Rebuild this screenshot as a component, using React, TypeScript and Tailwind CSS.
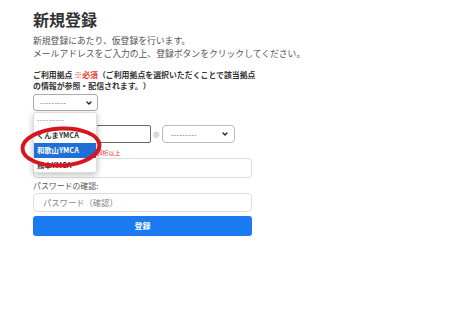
import { ChevronDown } from "lucide-react";

function FakeSelect({ className }: { className: string }) {
  return (
    <div className={`flex items-center justify-between bg-white border border-[#aaa] rounded-[3px] pl-[6px] pr-[4px] ${className}`}>
      <span className="text-[7px] text-[#555] tracking-[0.5px] leading-none">---------</span>
      <ChevronDown size={8} strokeWidth={4} className="text-[#222]" />
    </div>
  );
}

export default function App() {
  return (
    <div className="relative w-[450px] h-[311px] overflow-hidden bg-white font-['Noto_Sans_CJK_JP','Noto_Sans',sans-serif] text-[#444]">
      <div className="pl-[33px] pt-[8px]">
        <h1 className="text-[16px] leading-[22px] font-semibold text-[#333]">新規登録</h1>
        <p className="mt-[3.5px] text-[8.8px] leading-[13px] text-[#555]">
          新規登録にあたり、仮登録を行います。
          <br />
          メールアドレスをご入力の上、登録ボタンをクリックしてください。
        </p>
        <p className="mt-[9px] text-[7.9px] leading-[11px] font-bold text-[#333]">
          ご利用拠点 <span className="text-[#e8382f]">※必須</span>（ご利用拠点を選択いただくことで該当拠点
          <br />
          の情報が参照・配信されます。）
        </p>

        <div className="w-[219px]">
          <div className="relative mt-[3.5px] w-[65px]">
            <FakeSelect className="h-[17px] w-[65px]" />
            <div className="absolute left-0 top-[18px] z-10 w-[64px] bg-white border border-[#ddd] rounded-[3px] shadow-[0_2px_6px_rgba(0,0,0,0.25)] text-[7.3px] leading-[15px] font-bold text-[#333]">
              <div className="pl-[3px] h-[15px] text-[#777] font-normal tracking-[0.5px]">---------</div>
              <div className="pl-[3px] h-[15px]">くんまYMCA</div>
              <div className="pl-[3px] h-[15px] bg-[#1f6fd6] text-white">和歌山YMCA</div>
              <div className="pl-[3px] h-[14px]">熊本YMCA</div>
            </div>
          </div>

          <div className="mt-[1px] text-[8px] leading-[11px] text-[#555]">メールアドレス:</div>
          <div className="mt-[2px] flex items-center">
            <div className="h-[18px] w-[118px] border-[1.5px] border-[#666] rounded-[2px] bg-white" />
            <span className="mx-[2px] text-[7px] text-[#999] leading-none">@</span>
            <FakeSelect className="h-[18px] w-[73px] border-[#bbb] rounded-[4px] pl-[8px] pr-[5px]" />
          </div>

          <div className="mt-[4px] h-[11px] flex items-center text-[8px] text-[#555] leading-none">
            パスワード:
            <span className="ml-[6px] text-[6px] text-[#e8382f]">※英数8桁以上</span>
          </div>
          <div className="h-[20px] border border-[#ddd] rounded-[4px] bg-white" />

          <div className="mt-[2px] h-[11px] flex items-center text-[7.9px] text-[#555] leading-none">パスワードの確認:</div>
          <div className="mt-[2px] h-[19px] flex items-center border border-[#ddd] rounded-[4px] bg-white pl-[9px] text-[8.3px] text-[#888]">
            パスワード（確認）
          </div>

          <button className="mt-[4px] w-full h-[20px] rounded-[3px] bg-[#1a7af2] text-white text-[8px] font-bold flex items-center justify-center">
            登録
          </button>
        </div>
      </div>

      <svg className="absolute left-0 top-0 z-20 pointer-events-none" width="450" height="311">
        <ellipse cx="61" cy="147" rx="38.5" ry="18.5" fill="none" stroke="#d8141c" strokeWidth="4" transform="rotate(-3 61 147)" />
      </svg>
    </div>
  );
}
